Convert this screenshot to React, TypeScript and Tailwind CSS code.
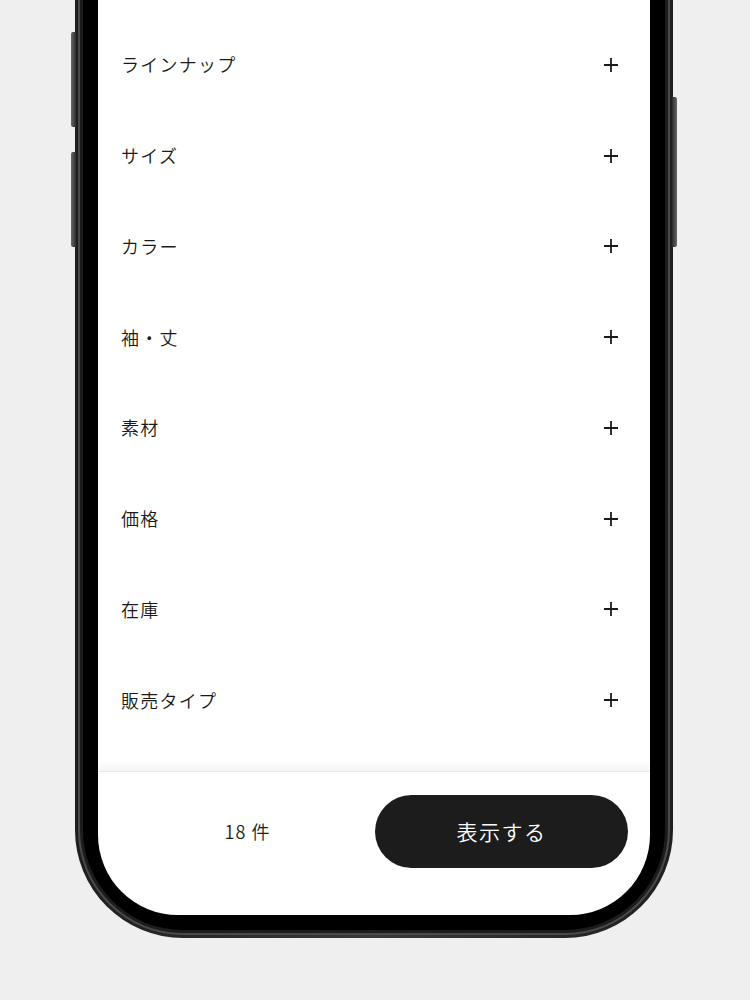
const filters = ['ラインナップ', 'サイズ', 'カラー', '袖・丈', '素材', '価格', '在庫', '販売タイプ']

function PlusIcon() {
  return (
    <svg width="16" height="16" viewBox="0 0 16 16" className="shrink-0">
      <path d="M8 1v14M1 8h14" stroke="#1a1a1a" strokeWidth="1.8" />
    </svg>
  )
}

function FilterRow({ label }: { label: string }) {
  return (
    <div className="flex h-[90.75px] items-center justify-between pl-[23px] pr-[31px] pt-[1px]">
      <span className="text-[18px] font-[350] tracking-[0.07em] text-[#1a1a1a]">{label}</span>
      <PlusIcon />
    </div>
  )
}

export default function App() {
  return (
    <div
      className="relative h-[1000px] w-[750px] overflow-hidden bg-[#efefef]"
      style={{ fontFamily: '"Noto Sans CJK JP", "Noto Sans", sans-serif' }}
    >
      {/* side buttons */}
      <div className="absolute left-[71px] top-[32px] h-[95px] w-[5px] rounded-l-[2px] bg-gradient-to-r from-[#6a6a6a] to-[#2c2c2c]" />
      <div className="absolute left-[71px] top-[152px] h-[95px] w-[5px] rounded-l-[2px] bg-gradient-to-r from-[#6a6a6a] to-[#2c2c2c]" />
      <div className="absolute left-[672px] top-[97px] h-[150px] w-[5px] rounded-r-[2px] bg-gradient-to-l from-[#6a6a6a] to-[#2c2c2c]" />

      {/* phone frame */}
      <div className="ml-[75px] w-[598px] rounded-b-[108px] bg-gradient-to-r from-[#1e1e1e] via-[#3a3a3a] to-[#1e1e1e] px-[3px] pb-[3px]">
        <div className="rounded-b-[105px] bg-[#4a4a4a] px-[2px] pb-[2px]">
          <div className="rounded-b-[103px] bg-[#1c1c1c] px-[3px] pb-[3px]">
            <div className="rounded-b-[100px] bg-black px-[15px] pb-[15px]">
              <div className="flex h-[915px] flex-col overflow-hidden rounded-b-[80px] bg-white">
                <div className="flex-1 pt-[19px]">
                  {filters.map((f) => (
                    <FilterRow key={f} label={f} />
                  ))}
                </div>
                <div className="relative flex h-[144px] items-start border-t border-[#e9e9e9] px-[22px] pt-[23px] shadow-[0_-5px_9px_rgba(0,0,0,0.05)]">
                  <div className="flex h-[73px] flex-1 items-center justify-center text-[18px] font-[350] tracking-[0.06em] text-[#1a1a1a]">
                    18 件
                  </div>
                  <button className="flex h-[73px] w-[253px] items-center justify-center rounded-full bg-[#1c1c1c] text-[21px] font-[350] tracking-[0.07em] text-white">
                    表示する
                  </button>
                </div>
              </div>
            </div>
          </div>
        </div>
      </div>
    </div>
  )
}
